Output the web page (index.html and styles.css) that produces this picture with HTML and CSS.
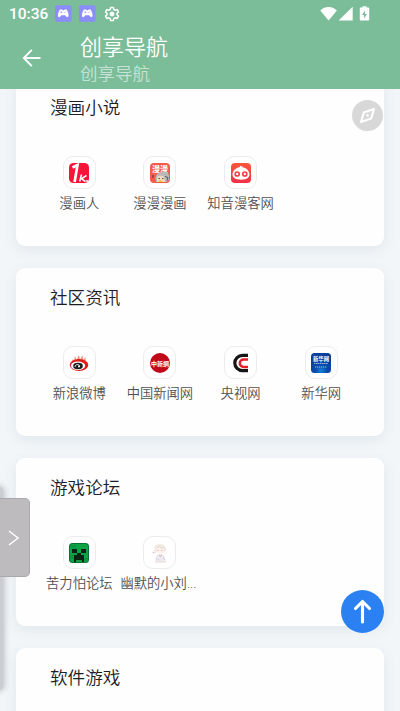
FILE: index.html
```html
<!DOCTYPE html>
<html lang="zh-CN">
<head>
<meta charset="utf-8">
<title>创享导航</title>
<link rel="stylesheet" href="styles.css">
</head>
<body>
<header class="header">
  <div class="status">
    <span class="clock">10:36</span>
    <svg class="pad" viewBox="0 0 16 16"><rect width="16" height="16" rx="2.5" fill="#8a8dfa"/><path d="M4.800 4h1.800l.7.8h1.400l.7-.8h1.800c1.300 1.700 2.100 4.300 1.900 6.300-.2 1.500-1.200 1.600-2.200.5L9.800 9.700H6.200L5.100 10.800C4.100 11.900 3.100 11.800 2.900 10.300 2.700 8.300 3.500 5.700 4.800 4z" fill="#fff"/><path d="M5.200 6.800h1.800M6.100 5.900v1.800M9.200 7.400l1.300-1.300" stroke="#8a8dfa" stroke-width=".7"/></svg>
    <svg class="pad" viewBox="0 0 16 16"><rect width="16" height="16" rx="2.5" fill="#8a8dfa"/><path d="M4.800 4h1.800l.7.8h1.400l.7-.8h1.800c1.300 1.700 2.100 4.300 1.900 6.300-.2 1.500-1.200 1.600-2.200.5L9.800 9.700H6.200L5.100 10.800C4.100 11.900 3.100 11.800 2.900 10.300 2.700 8.300 3.500 5.700 4.800 4z" fill="#fff"/><path d="M5.200 6.800h1.800M6.100 5.900v1.800M9.200 7.400l1.300-1.300" stroke="#8a8dfa" stroke-width=".7"/></svg>
    <svg class="gear" viewBox="0 0 16 16" fill="none" stroke="#fff" stroke-linejoin="round"><path d="M6.600 1.500h2.800l.4 2 1.400.8 2-.7 1.300 2.400-1.500 1.300v1.500l1.500 1.300-1.300 2.400-2-.7-1.400.8-.4 2H6.600l-.4-2-1.400-.8-2 .7-1.300-2.400L3 8.800V7.300L1.500 6l1.300-2.400 2 .7 1.400-.8z" stroke-width="1.500"/><circle cx="8" cy="8" r="2" fill="#fff"/></svg>
    <svg class="signals" viewBox="0 0 50 16" fill="#fff"><path d="M.3 4.500C5-.1 12-.1 16.900 4.500L8.600 14.500z"/><path d="M32.700.7v13.800H18.600z"/><path d="M40.500 1.500h2V.3h4v1.200h2q.7 0 .7.7v11.600q0 .7-.7.700h-8q-.7 0-.7-.7V2.200q0-.7.7-.7z"/><path d="M45 4.500L42 9h2v3.500L47 8h-2z" fill="#7bbd99"/></svg>
  </div>
  <div class="toolbar">
    <svg class="back" viewBox="0 0 20 20" fill="none" stroke="#fff" stroke-width="1.900"><path d="M18.500 10H2M9.800 1.800L1.800 10l8 8.200"/></svg>
    <div class="titles">
      <h1>创享导航</h1>
      <p>创享导航</p>
    </div>
  </div>
</header>
<main class="page">
  <section class="card">
    <h2>漫画小说</h2>
    <div class="grid">
      <a class="item"><span class="tile"><svg viewBox="0 0 20 20"><rect width="20" height="20" rx="4.500" fill="#fa1239"/><path d="M3.500 4.500l5-2.500L5.600 19" fill="none" stroke="#fff" stroke-width="2.700"/><path d="M12.500 11.500l-1.800 7M17.500 12.500l-5 3.200 4 3M18 17v2" fill="none" stroke="#fff" stroke-width="1.500"/></svg></span><span class="label">漫画人</span></a>
      <a class="item"><span class="tile"><svg viewBox="0 0 20 20"><rect width="20" height="20" rx="4" fill="#f65b4c"/><text class="comic" x="10" y="9">漫漫</text><path d="M6 19c-1-6 0-9 5-9 2-3 8-1 8 3v4l-3 2z" fill="#b7b9bb"/><path d="M7 14q4-3 7 0l1 5H7z" fill="#f3d8bd"/><path d="M8 19l2-2 3 2z" fill="#f4c52f"/><path d="M8.500 15.500h1.500m2 0h1.500M15 13.500l3 1-1 3" stroke="#55545a" fill="none"/><path d="M2 12h2v3H2z" fill="#a14a43"/></svg></span><span class="label">漫漫漫画</span></a>
      <a class="item"><span class="tile"><svg viewBox="0 0 20 20"><defs><linearGradient id="coral" x2="0" y2="1"><stop stop-color="#fa563d"/><stop offset="1" stop-color="#f62f47"/></linearGradient></defs><rect width="20" height="20" rx="4" fill="url(#coral)"/><path d="M1.500 11C2 7 5 5 8.500 4.200l1-1.700 1 1.200 1-1v1.500c4 .8 6.500 3 7 6.800 0 4-3 5.700-8.500 5.700S1.500 15 1.500 11z" fill="#fff"/><g fill="#fff" stroke="#f33f49" stroke-width="1.700"><circle cx="6.200" cy="11" r="2"/><circle cx="13.800" cy="11" r="2"/></g></svg></span><span class="label">知音漫客网</span></a>
    </div>
  </section>
  <section class="card">
    <h2>社区资讯</h2>
    <div class="grid">
      <a class="item"><span class="tile"><svg viewBox="0 0 20 20"><path d="M2 10L4 6l1 2 1-5 1.500 4L10 2l1 5 2.500-5 .5 5 2.500-3v6z" fill="#f58b78"/><ellipse cx="10" cy="12" rx="9.300" ry="6" fill="#df1d17"/><ellipse cx="9" cy="12.800" rx="7.200" ry="4.200" fill="#fff"/><ellipse cx="9" cy="13" rx="4.800" ry="3.200" fill="#1b1b1b"/><path d="M6 14c0-3 4-3 5-1" stroke="#eee" fill="none"/><circle cx="10" cy="13.500" r="1" fill="#fff"/></svg></span><span class="label">新浪微博</span></a>
      <a class="item"><span class="tile"><svg viewBox="0 0 20 20"><circle cx="10" cy="10" r="10" fill="#c0081a"/><text class="seal" x="10" y="12.500">中新網</text></svg></span><span class="label">中国新闻网</span></a>
      <a class="item"><span class="tile"><svg viewBox="0 0 20 20" fill="none"><path d="M17 2.300h-5.500a7.700 7.700 0 000 15.400H17" stroke="#151515" stroke-width="3.200"/><path d="M17 6.500h-4.500a3.700 3.700 0 000 7.400H17" stroke="#e51d2a" stroke-width="2.500"/></svg></span><span class="label">央视网</span></a>
      <a class="item"><span class="tile"><svg viewBox="0 0 20 20"><defs><radialGradient id="glow" cx=".5" cy=".9" r=".7"><stop stop-color="#1684d4"/><stop offset=".4" stop-color="#0b4aad"/><stop offset="1" stop-color="#083e9c"/></radialGradient></defs><rect width="20" height="20" rx="3.500" fill="url(#glow)"/><text class="xinhua" x="10" y="8.200">新华网</text><path d="M3 10.500h14" stroke="#a5bddf" stroke-width=".9" stroke-dasharray="1.500 .4"/><path d="M4 14h12" stroke="#9bb9df" stroke-width="1.200" stroke-dasharray="1.300 .7"/></svg></span><span class="label">新华网</span></a>
    </div>
  </section>
  <section class="card">
    <h2>游戏论坛</h2>
    <div class="grid">
      <a class="item"><span class="tile"><svg viewBox="0 0 20 20"><rect width="20" height="20" rx="3.500" fill="#087336"/><rect x="1" y="1" width="18" height="18" rx="2.500" fill="#0ba345"/><path d="M2 2h5v3H2zm10 13h7v3h-7zM1 12h4v4H1z" fill="#0b9640"/><path d="M3 6h5v4H3zm9 0h5v4h-5zM8 10h4v2h3v7h-2v-2H7v2H5v-7h3z" fill="#0a2414"/></svg></span><span class="label">苦力怕论坛</span></a>
      <a class="item"><span class="tile"><svg viewBox="0 0 20 20"><path d="M5 8C3 3 6 .5 10 1c4-.5 6.500 3 4.500 8l-4.500 2z" fill="#f3ebe4"/><path d="M6.500 6q3.500-2 7 0v3q-3.500 3-7 0z" fill="#fff2ec"/><path d="M6 12l4-1 4 1 2 7H5z" fill="#efebf1"/><path d="M4.500 7l1 3M15 4l.5 4M6 5l3-2 2 2 3-1" stroke="#ddd0ca" stroke-width=".6" fill="none"/><path d="M7.300 7.500h1.200m2.800 0h1.200M9 12l1 1.500 2-1.500M2.500 9l2 1" stroke="#c9a0a6" stroke-width=".8" fill="none"/><path d="M6 15l3 2m4-3l2 3" stroke="#c3c7de" stroke-width=".8"/><path d="M5 19h11" stroke="#e4d6cb" stroke-width=".8"/></svg></span><span class="label">幽默的小刘<span class="dots">...</span></span></a>
    </div>
  </section>
  <section class="card">
    <h2>软件游戏</h2>
  </section>
</main>
<div class="edge-shadow"></div>
<div class="drawer"><svg viewBox="0 0 12 16" fill="none" stroke="#fff" stroke-width="1.500"><path d="M1 1l9 7-9 7"/></svg></div>
<div class="compass"><svg viewBox="0 0 31 31" fill="none" stroke="#fff" stroke-width="2.100" stroke-linejoin="round"><path d="M22 9l-2.800 9.400L9 22l2.800-9.400z"/><circle cx="15.500" cy="15.500" r="1.300" fill="#fff" stroke="none"/></svg></div>
<div class="to-top"><svg viewBox="0 0 43 43" fill="none" stroke="#fff" stroke-width="3.100" stroke-linecap="round" stroke-linejoin="round"><path d="M21.500 32V11.500M14.500 18.500l7-7 7 7"/></svg></div>
</body>
</html>
```
FILE: styles.css
```css
* { box-sizing: border-box; }
body {
  margin: 0;
  height: 711px;
  overflow: hidden;
  display: flex;
  flex-direction: column;
  position: relative;
  background: #f2f6f9;
  font-family: "Noto Sans CJK SC", sans-serif;
  font-weight: 350;
}
svg { display: block; }
h1, h2, p { margin: 0; font-weight: 350; }

.header { flex: none; height: 89px; background: #7bbd99; color: #fff; }
.status { display: flex; align-items: center; height: 27px; padding-left: 9px; }
.clock { width: 46px; padding-top: 1px; font: 500 15.500px/27px Roboto, sans-serif; }
.pad { width: 16.500px; height: 17px; margin-right: 7.500px; }
.gear { width: 16px; height: 16px; margin-left: 1px; }
.signals { width: 50px; height: 16px; margin: 0 30px 0 auto; position: relative; top: .5px; }
.toolbar { display: flex; }
.back { width: 20px; height: 20px; margin: 21px 38px 0 22px; }
.titles { padding-top: 2px; }
h1 { font-size: 22px; line-height: 32px; }
.titles p { font-size: 17.500px; line-height: 24px; color: #c6e2d4; }

.page { flex: 1; min-height: 0; overflow: hidden; padding: 0 16.500px 0 16px; }
.card {
  height: 168px;
  margin-bottom: 22px;
  padding: 14px 22px 0 23px;
  border-radius: 9px;
  background: #fefefe;
  box-shadow: 0 4px 14px rgba(70, 90, 110, .09);
}
.card:first-child { margin-top: -11px; }
h2 { padding-left: 11px; font-size: 17.600px; line-height: 30px; color: #1c2025; }
.grid { display: grid; grid-template-columns: repeat(4, 1fr); margin-top: 34px; }
.item { display: flex; flex-direction: column; align-items: center; min-width: 0; }
.tile {
  display: flex;
  align-items: center;
  justify-content: center;
  width: 33px;
  height: 33px;
  border: 1px solid #ececee;
  border-radius: 10px;
  background: #fff;
}
.tile svg { width: 20px; height: 20px; }
.label {
  margin-top: 4px;
  white-space: nowrap;
  font-size: 13.300px;
  line-height: 20px;
  color: #505050;
}
.dots { font-family: Roboto, sans-serif; margin-right: 3px; }
.comic, .seal, .xinhua { fill: #fff; text-anchor: middle; font-weight: 700; }
.comic { font-size: 8px; }
.seal { font-size: 6px; }
.xinhua { font-size: 5.300px; }

.edge-shadow {
  position: absolute;
  left: -10px;
  top: 487px;
  width: 13px;
  height: 203px;
  border-radius: 4px;
  background: rgba(100, 105, 110, .28);
  box-shadow: 0 0 6px 1px rgba(90, 95, 100, .4);
}
.drawer {
  position: absolute;
  left: 0;
  top: 498px;
  width: 30px;
  height: 79px;
  display: flex;
  align-items: center;
  padding-left: 8px;
  border: 1px solid #a9a9ab;
  border-width: 1px 1px 1px 0;
  border-radius: 0 5px 5px 0;
  background: #bdbbbe;
}
.drawer svg { width: 12px; height: 16px; }
.compass {
  position: absolute;
  left: 352px;
  top: 100px;
  width: 31px;
  height: 31px;
  border-radius: 50%;
  background: #d8d8d8;
}
.to-top {
  position: absolute;
  left: 341px;
  top: 589.500px;
  width: 43px;
  height: 43px;
  border-radius: 50%;
  background: #2b81f1;
}
```
